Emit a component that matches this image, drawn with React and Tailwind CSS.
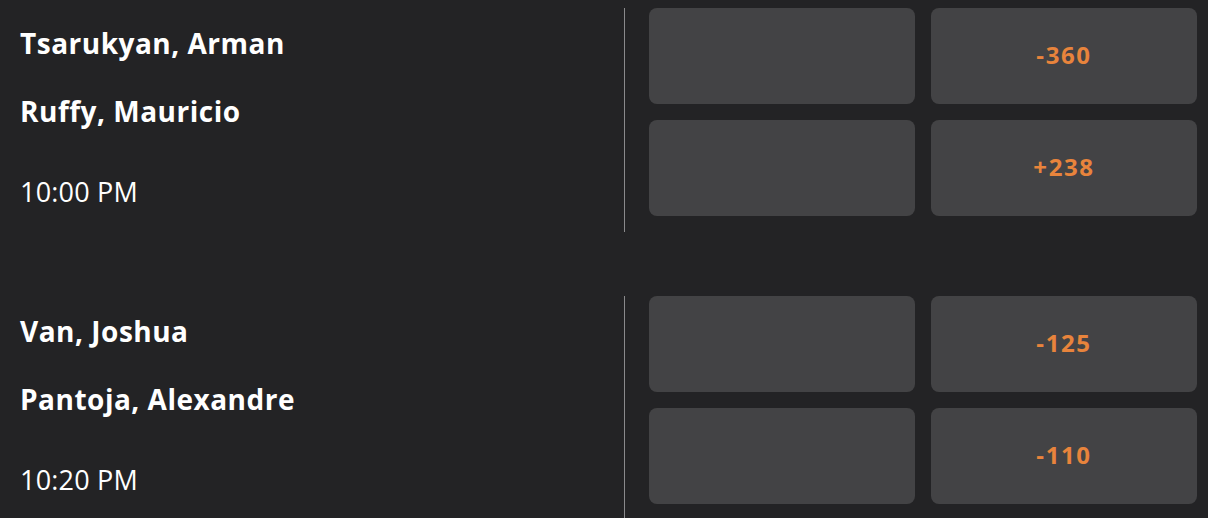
import React from "react";

const fights = [
  { a: "Tsarukyan, Arman", b: "Ruffy, Mauricio", time: "10:00 PM", oddsA: "-360", oddsB: "+238", last: false },
  { a: "Van, Joshua", b: "Pantoja, Alexandre", time: "10:20 PM", oddsA: "-125", oddsB: "-110", last: true },
];

function OddsButton({ value }) {
  return (
    <button className="h-[96px] w-[266px] rounded-[8px] bg-[#434345] pb-[3px] text-[24px] tracking-[1.6px] font-bold text-[#e8843c] flex items-center justify-center">
      {value}
    </button>
  );
}

function FightRow({ fight }) {
  return (
    <div className={`flex ${fight.last ? "h-[222px]" : "h-[224px] mb-[64px]"}`}>
      <div className="flex-1 border-r border-[#8a8a8c] pl-[20px] pt-[17px] text-white">
        <div className="h-[36px] leading-[36px] text-[28px] tracking-[0.5px] font-bold">{fight.a}</div>
        <div className="h-[36px] leading-[36px] text-[28px] tracking-[0.5px] font-bold mt-[32px]">{fight.b}</div>
        <div className="h-[36px] leading-[36px] text-[27px] tracking-[0.2px] mt-[45px]">{fight.time}</div>
      </div>
      <div className="pl-[24px] pr-[11px] grid grid-cols-2 gap-x-[16px] gap-y-[16px] content-start">
        <OddsButton value="" />
        <OddsButton value={fight.oddsA} />
        <OddsButton value="" />
        <OddsButton value={fight.oddsB} />
      </div>
    </div>
  );
}

export default function App() {
  return (
    <div className="min-h-screen w-full bg-[#232325] pt-[8px] overflow-hidden" style={{ fontFamily: '"Open Sans", sans-serif' }}>
      {fights.map((f) => (
        <FightRow key={f.a} fight={f} />
      ))}
    </div>
  );
}
